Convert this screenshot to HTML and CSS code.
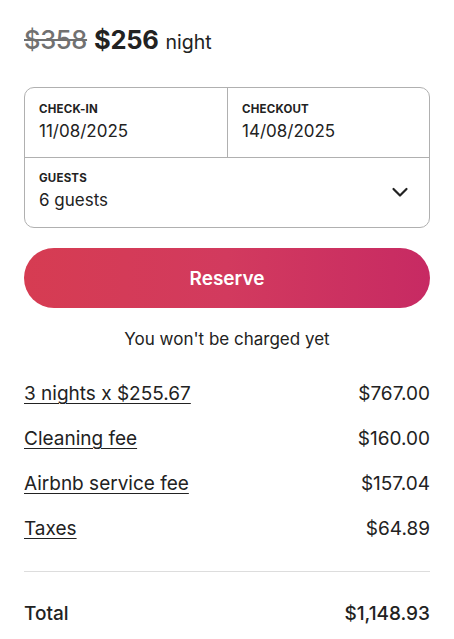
FILE: index.html
```html
<!DOCTYPE html>
<html>
<head>
<meta charset="utf-8">
<link rel="stylesheet" href="styles.css">
</head>
<body>
<div class="card">
  <div class="price">
    <span class="old">$358</span>
    <span class="now">$256</span>
    <span class="unit">night</span>
  </div>
  <div class="picker">
    <div class="dates">
      <div class="cell">
        <div class="label">CHECK-IN</div>
        <div class="value">11/08/2025</div>
      </div>
      <div class="cell right">
        <div class="label">CHECKOUT</div>
        <div class="value">14/08/2025</div>
      </div>
    </div>
    <div class="guests">
      <div>
        <div class="label">GUESTS</div>
        <div class="value">6 guests</div>
      </div>
      <svg class="chev" width="18" height="18" viewBox="0 0 18 18"><path d="M2.5 6 L9 12.5 L15.5 6" fill="none" stroke="#222" stroke-width="2.2" stroke-linecap="round" stroke-linejoin="round"/></svg>
    </div>
  </div>
  <button class="reserve">Reserve</button>
  <div class="note">You won't be charged yet</div>
  <div class="rows">
    <div class="row"><span class="link">3 nights x $255.67</span><span>$767.00</span></div>
    <div class="row"><span class="link">Cleaning fee</span><span>$160.00</span></div>
    <div class="row"><span class="link">Airbnb service fee</span><span>$157.04</span></div>
    <div class="row"><span class="link">Taxes</span><span>$64.89</span></div>
  </div>
  <div class="total"><span>Total</span><span>$1,148.93</span></div>
</div>
</body>
</html>
```
FILE: styles.css
```css
* { box-sizing: border-box; }
body {
  margin: 0;
  background: #fff;
  font-family: Inter, "Noto Sans", "Liberation Sans", sans-serif;
  color: #222;
}
.card {
  padding: 24px 24px 0 24px;
}
.price {
  display: flex;
  align-items: baseline;
  gap: 7px;
  height: 38px;
}
.old {
  font-size: 25.5px;
  color: #717171;
  text-decoration: line-through;
  font-weight: 500;
  letter-spacing: -0.3px;
}
.now {
  font-size: 25.5px;
  font-weight: 700;
  color: #222;
  letter-spacing: -0.3px;
}
.unit {
  font-size: 19.5px;
  color: #222;
}
.picker {
  margin-top: 25px;
  border: 1px solid #b0b0b0;
  border-radius: 10px;
  overflow: hidden;
}
.dates {
  display: grid;
  grid-template-columns: 1fr 1fr;
  border-bottom: 1px solid #b0b0b0;
  height: 70px;
}
.cell {
  padding: 14px 14px 0 14px;
}
.cell.right {
  border-left: 1px solid #b0b0b0;
}
.label {
  font-size: 11.5px;
  font-weight: 700;
  letter-spacing: 0.2px;
  color: #222;
  line-height: 14px;
}
.value {
  font-size: 17px;
  line-height: 20px;
  margin-top: 5px;
  color: #222;
}
.guests {
  height: 69px;
  display: flex;
  justify-content: space-between;
  align-items: center;
  padding: 0 20px 4px 14px;
}
.chev { display: block; margin-top: 2px; }
.reserve {
  display: block;
  width: 100%;
  height: 60px;
  margin-top: 20px;
  border: none;
  border-radius: 30px;
  background: linear-gradient(to right, #d63c52 0%, #d23a5e 50%, #c72a63 100%);
  color: #fff;
  font-family: inherit;
  font-size: 19px;
  font-weight: 600;
}
.note {
  text-align: center;
  font-size: 17px;
  margin-top: 21px;
  line-height: 20px;
  color: #222;
}
.rows {
  margin-top: 33px;
  display: flex;
  flex-direction: column;
  gap: 21px;
}
.row, .total {
  display: flex;
  justify-content: space-between;
  font-size: 19px;
  line-height: 24px;
  color: #222;
}
.link {
  text-decoration: underline;
  text-decoration-thickness: 1px;
  text-underline-offset: 3px;
}
.total {
  margin-top: 30px;
  border-top: 1px solid #dddddd;
  padding-top: 30px;
  font-weight: 500;
}
```
